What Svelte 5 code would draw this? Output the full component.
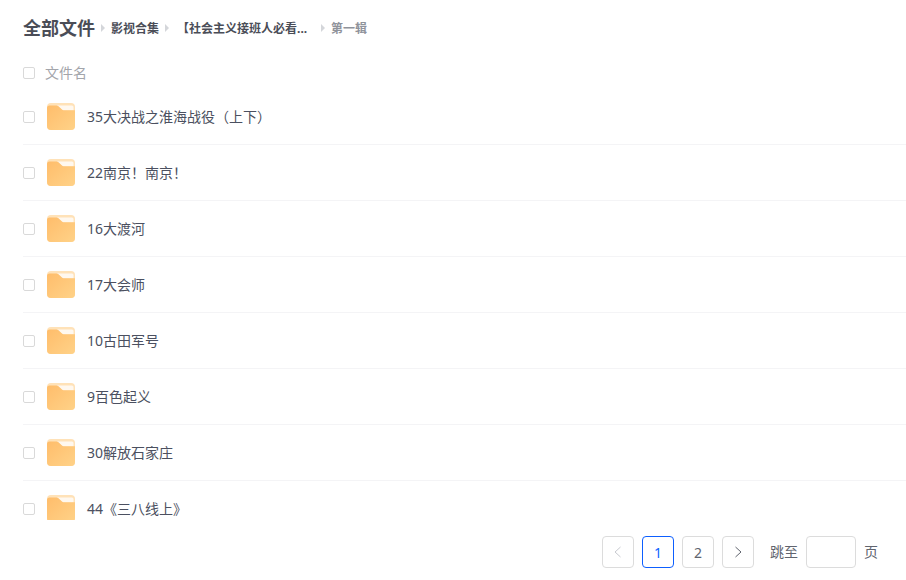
<script>
  const folders = [
    '35大决战之淮海战役（上下）',
    '22南京！南京！',
    '16大渡河',
    '17大会师',
    '10古田军号',
    '9百色起义',
    '30解放石家庄',
    '44《三八线上》'
  ];
</script>

<div class="page">
  <header class="crumbs">
    <span class="crumbs__root">全部文件</span>
    <i class="crumbs__arrow"></i>
    <span class="crumbs__item">影视合集</span>
    <i class="crumbs__arrow"></i>
    <span class="crumbs__item crumbs__item_long">【社会主义接班人必看...</span>
    <i class="crumbs__arrow"></i>
    <span class="crumbs__item crumbs__item_current">第一辑</span>
  </header>

  <div class="head">
    <span class="check"></span>
    <span class="head__label">文件名</span>
  </div>

  <div class="list">
    {#each folders as name}
      <div class="row">
        <span class="check"></span>
        <svg class="folder" viewBox="0 0 28 27" width="28" height="27">
          <rect width="28" height="27" rx="4" fill="#ffe2b8" />
          <path d="M10 2.500h15a1.500 1.500 0 0 1 1.500 1.500v3.500H15z" fill="#fff8ef" />
          <path d="M0 5a2.500 2.500 0 0 1 2.500-2.500h7a3 3 0 0 1 2 .8l3.500 3.200a2 2 0 0 0 1.500.7H28v15.800a4 4 0 0 1-4 4H4a4 4 0 0 1-4-4z" fill="url(#fold)" />
          <defs>
            <linearGradient id="fold" x1="0" y1="0" x2="1" y2="1">
              <stop offset="0" stop-color="#ffbd6b" />
              <stop offset="1" stop-color="#ffd288" />
            </linearGradient>
          </defs>
        </svg>
        <span class="row__name">{name}</span>
      </div>
    {/each}
  </div>

  <footer class="pager">
    <button class="pager__btn pager__btn_disabled" aria-label="prev">
      <svg viewBox="0 0 10 12" width="10" height="12"><path d="M7.500 1 2 6l5.500 5" fill="none" stroke="currentColor" /></svg>
    </button>
    <button class="pager__btn pager__btn_active">1</button>
    <button class="pager__btn">2</button>
    <button class="pager__btn" aria-label="next">
      <svg viewBox="0 0 10 12" width="10" height="12"><path d="M2.500 1 8 6l-5.500 5" fill="none" stroke="currentColor" /></svg>
    </button>
    <span class="pager__text pager__text_jump">跳至</span>
    <span class="pager__input"></span>
    <span class="pager__text">页</span>
  </footer>
</div>

<style>
  :global(body) {
    margin: 0;
    background: #fff;
    font-family: "Noto Sans", "Noto Sans CJK SC", sans-serif;
  }

  .page {
    width: 906px;
    height: 580px;
    overflow: hidden;
    display: flex;
    flex-direction: column;
    box-sizing: border-box;
    padding-left: 23px;
  }

  .crumbs {
    height: 56px;
    flex: none;
    display: flex;
    align-items: center;
    color: #4a4d57;
  }

  .crumbs__root {
    font-size: 18px;
    font-weight: 700;
    line-height: 24px;
  }

  .crumbs__arrow {
    width: 0;
    height: 0;
    margin: 0 6px;
    border-left: 4px solid #d4d6da;
    border-top: 4px solid transparent;
    border-bottom: 4px solid transparent;
  }

  .crumbs__item {
    padding-top: 2px;
    font-size: 12px;
    font-weight: 700;
    line-height: 16px;
  }

  .crumbs__item_long {
    width: 138px;
    margin-left: 2px;
  }

  .crumbs__item_current {
    color: #90939b;
  }

  .head {
    height: 33px;
    flex: none;
    display: flex;
    align-items: center;
  }

  .head__label {
    margin-left: 10px;
    padding-bottom: 2px;
    font-size: 14px;
    color: #a3a5ab;
  }

  .check {
    width: 10px;
    height: 10px;
    flex: none;
    border: 1px solid #d9d9d9;
    border-radius: 2px;
  }

  .list {
    height: 431px;
    flex: none;
    overflow: hidden;
  }

  .row {
    height: 55px;
    display: flex;
    align-items: center;
    border-bottom: 1px solid #f4f4f6;
  }

  .folder {
    margin-left: 12px;
    flex: none;
  }

  .row__name {
    margin-left: 12px;
    padding-bottom: 2px;
    font-size: 14px;
    color: #4b5060;
  }

  .pager {
    flex: 1;
    display: flex;
    align-items: flex-start;
    justify-content: flex-end;
    padding: 16px 28px 0 0;
  }

  .pager__btn {
    width: 32px;
    height: 32px;
    margin-right: 8px;
    padding: 0;
    display: flex;
    align-items: center;
    justify-content: center;
    box-sizing: border-box;
    background: #fff;
    border: 1px solid #dcdcdc;
    border-radius: 4px;
    font: inherit;
    font-size: 14px;
    color: #60646e;
  }

  .pager__btn_disabled {
    color: #c8cad0;
  }

  .pager__btn_active {
    border-color: #0d5fff;
    color: #0d5fff;
  }

  .pager__text {
    line-height: 32px;
    font-size: 14px;
    color: #60646e;
  }

  .pager__text_jump {
    margin-left: 8px;
  }

  .pager__input {
    width: 50px;
    height: 32px;
    margin: 0 8px;
    box-sizing: border-box;
    border: 1px solid #dcdcdc;
    border-radius: 4px;
  }
</style>
